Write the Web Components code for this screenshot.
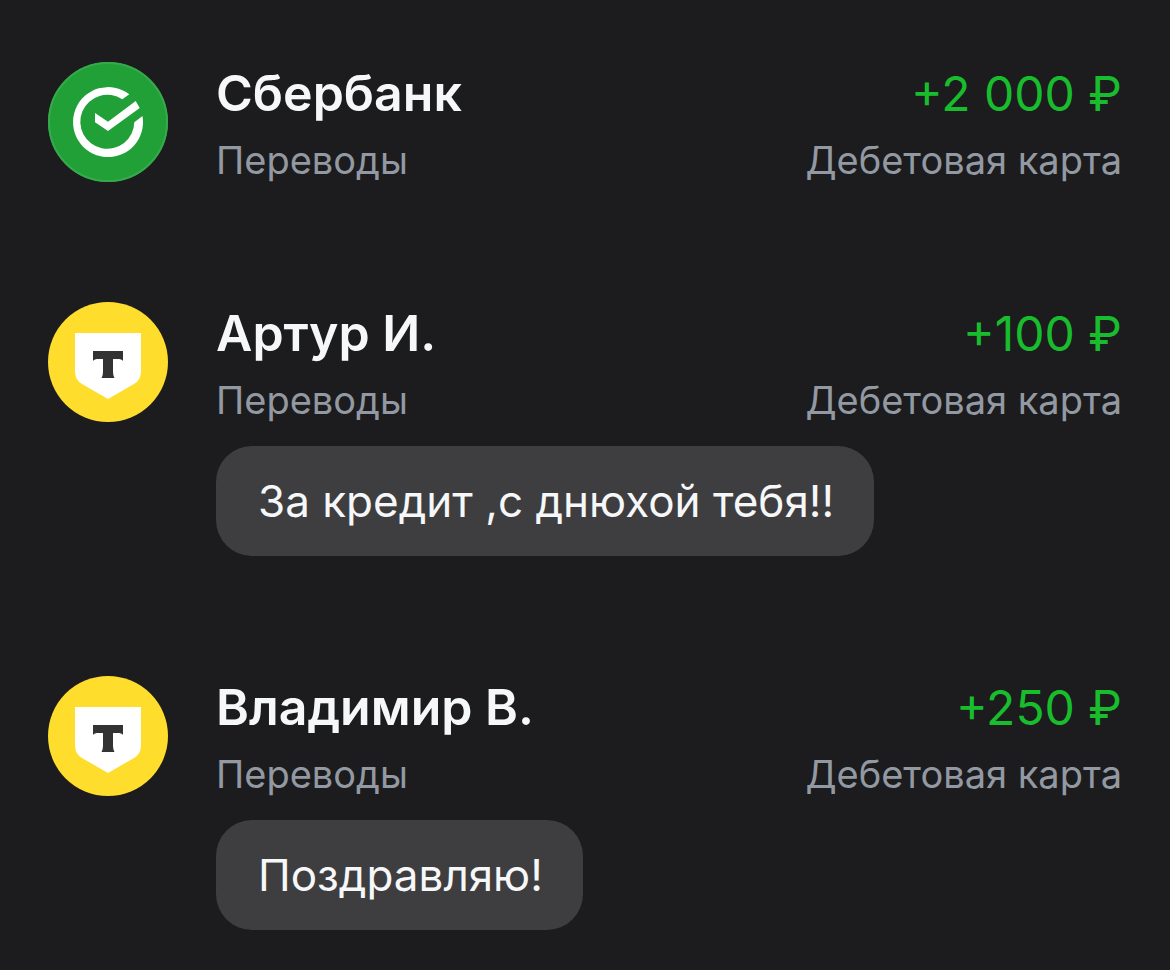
<!DOCTYPE html>
<html lang="ru">
<head>
<meta charset="utf-8">
<meta name="viewport" content="width=device-width, initial-scale=1">
<title>Операции</title>
<style>
  html { background: #1c1c1e; }
  body { margin: 0; font-family: Inter, "Noto Sans", sans-serif; color: #f6f7f8; }
</style>
</head>
<body>
<operation-list>
  <operation-item name="Сбербанк" category="Переводы" amount="+2 000 ₽" account="Дебетовая карта">
    <bank-logo slot="logo" bank="sber"></bank-logo>
  </operation-item>
  <operation-item name="Артур И." category="Переводы" amount="+100 ₽" account="Дебетовая карта">
    <bank-logo slot="logo" bank="tbank"></bank-logo>
    <message-bubble slot="message">За кредит ,с днюхой тебя!!</message-bubble>
  </operation-item>
  <operation-item name="Владимир В." category="Переводы" amount="+250 ₽" account="Дебетовая карта">
    <bank-logo slot="logo" bank="tbank"></bank-logo>
    <message-bubble slot="message">Поздравляю!</message-bubble>
  </operation-item>
</operation-list>

<script>
class OperationList extends HTMLElement {
  constructor() {
    super();
    this.attachShadow({ mode: 'open' }).innerHTML = `
      <style>
        :host { display: flex; flex-direction: column; gap: 120px; padding: 62px 48px 40px; }
      </style>
      <slot></slot>`;
    this.setAttribute('role', 'list');
  }
}

class OperationItem extends HTMLElement {
  constructor() {
    super();
    this.attachShadow({ mode: 'open' }).innerHTML = `
      <style>
        :host { display: grid; grid-template-columns: 120px 1fr; column-gap: 48px; }
        .lines { display: flex; flex-direction: column; gap: 8px; height: 120px; }
        .line { display: flex; justify-content: space-between; align-items: baseline; gap: 24px; white-space: nowrap; }
        .main { font-size: 50px; line-height: 62px; }
        .sub { font-size: 38px; line-height: 54px; color: #9299a2; }
        .name { font-weight: 600; }
        .amount { font-size: 48px; color: #18bc2c; }
        ::slotted([slot="message"]) { grid-column: 2; justify-self: start; margin-top: 24px; }
      </style>
      <slot name="logo"></slot>
      <div class="lines">
        <div class="line main"><span class="name"></span><span class="amount"></span></div>
        <div class="line sub"><span class="category"></span><span class="account"></span></div>
      </div>
      <slot name="message"></slot>`;
  }
  connectedCallback() {
    this.setAttribute('role', 'listitem');
    for (const key of ['name', 'amount', 'category', 'account']) {
      this.shadowRoot.querySelector('.' + key).textContent = this.getAttribute(key);
    }
  }
}

class MessageBubble extends HTMLElement {
  constructor() {
    super();
    this.attachShadow({ mode: 'open' }).innerHTML = `
      <style>
        :host { display: block; padding: 28px 40px 28px 42px; border-radius: 36px; background: #3e3e40; font-size: 44px; line-height: 54px; }
      </style>
      <slot></slot>`;
  }
}

const LOGOS = {
  sber: `
    <circle cx="60" cy="60" r="60" fill="#21a038"/>
    <circle cx="60" cy="60" r="59" fill="none" stroke="#36a94b" stroke-width="2"/>
    <path fill="#fff" d="M81.3 32.3A35 35 0 1 0 94.5 54L86.3 60.3A27 27 0 1 1 74.3 37.3Z"/>
    <path fill="#fff" d="M47 51L60 59.7L87.7 39L91.7 46L60 69L47 60.3Z"/>`,
  tbank: `
    <circle cx="60" cy="60" r="60" fill="#ffdd2d"/>
    <path fill="#fff" d="M27 31H93V68C93 75 91 79 86 82L60 97L34 82C29 79 27 75 27 68Z"/>
    <path fill="#333" d="M45 49H75V59C74 57.5 72 57 70 57H65V69C65 72 65.5 74 66.5 76H53.5C54.5 74 55 72 55 69V57H50C48 57 46 57.5 45 59Z"/>`
};

class BankLogo extends HTMLElement {
  constructor() {
    super();
    this.attachShadow({ mode: 'open' });
  }
  connectedCallback() {
    this.shadowRoot.innerHTML = `
      <style>
        :host { display: block; width: 120px; height: 120px; }
        svg { display: block; width: 100%; height: 100%; }
      </style>
      <svg viewBox="0 0 120 120" aria-hidden="true">${LOGOS[this.getAttribute('bank')]}</svg>`;
  }
}

customElements.define('operation-list', OperationList);
customElements.define('operation-item', OperationItem);
customElements.define('message-bubble', MessageBubble);
customElements.define('bank-logo', BankLogo);
</script>
</body>
</html>
